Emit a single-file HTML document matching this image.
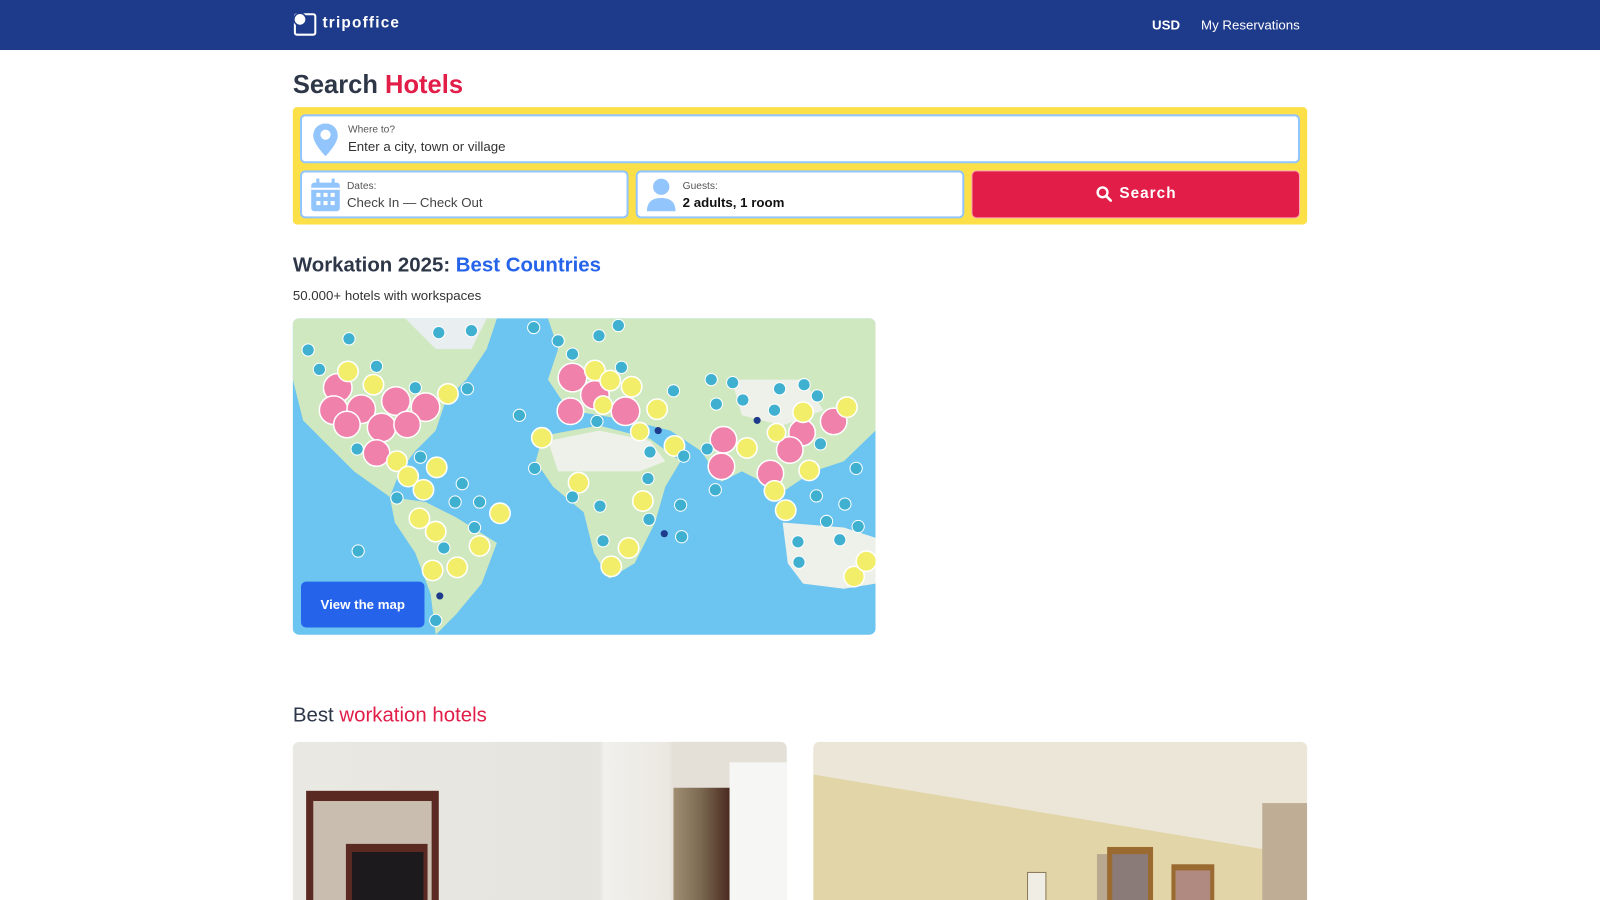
<!DOCTYPE html>
<html><head><meta charset="utf-8">
<style>
*{box-sizing:border-box;margin:0;padding:0}
html,body{width:1600px;height:900px;overflow:hidden;background:#fff}
body{font-family:"Liberation Sans","DejaVu Sans",sans-serif;color:#1f2937;position:relative}
#w{position:absolute;left:0;top:0;width:1568px;height:882px;transform:scale(1.020408);transform-origin:0 0}
.nav{position:absolute;left:0;top:0;width:1568px;height:49px;background:#1e3a8a}
.abs{position:absolute}
.box{position:absolute;background:#fff;border:2px solid #93c5fd;border-radius:5px}
.lbl{position:absolute;font-size:10px;color:#555}
.val{position:absolute;font-size:13px;color:#333}
</style></head><body><div id="w">
<div class="nav">
  <svg class="abs" style="left:287px;top:12px" width="24" height="24" viewBox="0 0 24 24"><rect x="2" y="2" width="20" height="20" rx="2" fill="none" stroke="#fff" stroke-width="2"/><circle cx="7" cy="7" r="6" fill="#fff" stroke="#1e3a8a" stroke-width="1.5"/></svg>
  <div class="abs" style="left:316px;top:14px;color:#fff;font-weight:bold;font-size:15px;letter-spacing:1.2px">tripoffice</div>
  <div class="abs" style="left:1129px;top:17px;color:#fff;font-weight:bold;font-size:13px">USD</div>
  <div class="abs" style="left:1177px;top:17px;color:#fff;font-size:13px">My Reservations</div>
</div>
<div class="abs" style="left:287px;top:69px;font-size:25px;font-weight:bold;color:#2d3748">Search <span style="color:#e11d48">Hotels</span></div>
<div class="abs" style="left:287px;top:105px;width:994px;height:115px;background:#fde047;border-radius:4px"></div>
<div class="box" style="left:294px;top:112px;width:980px;height:48px">
  <svg class="abs" style="left:10px;top:6px" width="26" height="34" viewBox="0 0 26 34"><path d="M13 1C6 1 1 6 1 13c0 8 12 20 12 20s12-12 12-20C25 6 20 1 13 1z" fill="#93c5fd"/><circle cx="13" cy="12" r="5" fill="#fff"/></svg>
  <div class="lbl" style="left:45px;top:8px">Where to?</div>
  <div class="val" style="left:45px;top:22px">Enter a city, town or village</div>
</div>
<div class="box" style="left:294px;top:167px;width:322px;height:47px">
  <svg class="abs" style="left:8px;top:5px" width="30" height="34" viewBox="0 0 30 34"><rect x="1" y="5" width="28" height="28" rx="3" fill="#93c5fd"/><rect x="6" y="1" width="3" height="7" fill="#93c5fd"/><rect x="21" y="1" width="3" height="7" fill="#93c5fd"/><rect x="1" y="10" width="28" height="2" fill="#fff"/><g fill="#fff"><rect x="6" y="15" width="4" height="4"/><rect x="13" y="15" width="4" height="4"/><rect x="20" y="15" width="4" height="4"/><rect x="6" y="23" width="4" height="4"/><rect x="13" y="23" width="4" height="4"/><rect x="20" y="23" width="4" height="4"/></g></svg>
  <div class="lbl" style="left:44px;top:8px">Dates:</div>
  <div class="val" style="left:44px;top:22px;color:#444">Check In — Check Out</div>
</div>
<div class="box" style="left:623px;top:167px;width:322px;height:47px">
  <svg class="abs" style="left:8px;top:5px" width="30" height="34" viewBox="0 0 30 34"><circle cx="15" cy="9" r="8" fill="#93c5fd"/><path d="M1 33c0-9 5-13 14-13s14 4 14 13z" fill="#93c5fd"/></svg>
  <div class="lbl" style="left:44px;top:8px">Guests:</div>
  <div class="val" style="left:44px;top:22px;color:#111;font-weight:bold">2 adults, 1 room</div>
</div>
<div class="abs" style="left:952px;top:167px;width:322px;height:47px;background:#e11d48;border-radius:5px;border:1px solid #f9a8b8"></div>
<svg class="abs" style="left:1074px;top:182px" width="16" height="16" viewBox="0 0 16 16"><circle cx="6.5" cy="6.5" r="4.8" fill="none" stroke="#fff" stroke-width="2.4"/><path d="M10 10l4.5 4.5" stroke="#fff" stroke-width="2.6" stroke-linecap="round"/></svg>
<div class="abs" style="left:1097px;top:181px;color:#fff;font-weight:bold;font-size:15px;letter-spacing:1px">Search</div>

<div class="abs" style="left:287px;top:249px;font-size:20px;font-weight:bold;color:#2d3748">Workation 2025: <span style="color:#2563eb">Best Countries</span></div>
<div class="abs" style="left:287px;top:282px;font-size:13px;color:#333">50.000+ hotels with workspaces</div>

<div class="abs" style="left:287px;top:312px;width:571px;height:310px;border-radius:6px;overflow:hidden;background:#6cc4f0">
<svg width="571" height="310" viewBox="0 0 571 310">
<g fill="#cfe8bf">
<path d="M0 0H200L190 30L170 60L150 80L140 110L120 130L105 150L95 175L60 150L30 120L10 100L0 60Z"/>
<path d="M95 175L130 180L160 195L200 220L185 260L160 290L140 310L135 270L120 230L100 200Z"/>
<path d="M250 0H571V110L540 140L510 150L480 170L440 150L420 160L400 130L370 110L330 100L300 95L270 90L250 60L260 30Z"/>
<path d="M245 115L300 105L350 118L380 140L365 165L355 200L335 240L310 255L295 230L285 190L255 165L238 140Z"/>
<path d="M250 120L300 110L350 120L365 140L340 150L300 150L260 150Z" fill="#eef0ea"/>
<path d="M480 200L540 205L571 215V260L540 265L500 260L485 240Z" fill="#eef0ea"/>
<path d="M430 60L500 60L520 90L480 105L440 95Z" fill="#eef0ea"/>
<path d="M110 0H190L175 30L140 30Z" fill="#e9eef0"/>
</g>
<g fill="#f081aa" stroke="#fff" stroke-width="1.5">
<circle cx="44" cy="68" r="14"/><circle cx="40" cy="90" r="14"/><circle cx="67" cy="89" r="14"/><circle cx="101" cy="81" r="14"/><circle cx="130" cy="87" r="14"/><circle cx="53" cy="104" r="13"/><circle cx="87" cy="107" r="14"/><circle cx="112" cy="104" r="13"/><circle cx="82" cy="132" r="13"/><circle cx="274" cy="58" r="14"/><circle cx="296" cy="75" r="14"/><circle cx="272" cy="91" r="13"/><circle cx="326" cy="91" r="14"/><circle cx="422" cy="119" r="13"/><circle cx="420" cy="145" r="13"/><circle cx="499" cy="112" r="13"/><circle cx="487" cy="129" r="13"/><circle cx="468" cy="152" r="13"/><circle cx="530" cy="101" r="13"/>
</g>
<g fill="#f2ee6a" stroke="#fff" stroke-width="1.5">
<circle cx="54" cy="52" r="10"/><circle cx="79" cy="65" r="10"/><circle cx="152" cy="74" r="10"/><circle cx="296" cy="51" r="10"/><circle cx="311" cy="61" r="10"/><circle cx="332" cy="67" r="10"/><circle cx="304" cy="85" r="9"/><circle cx="357" cy="89" r="10"/><circle cx="340" cy="111" r="9"/><circle cx="244" cy="117" r="10"/><circle cx="374" cy="125" r="10"/><circle cx="445" cy="127" r="10"/><circle cx="474" cy="112" r="9"/><circle cx="500" cy="92" r="10"/><circle cx="506" cy="149" r="10"/><circle cx="543" cy="87" r="10"/><circle cx="102" cy="140" r="10"/><circle cx="113" cy="155" r="10"/><circle cx="141" cy="146" r="10"/><circle cx="128" cy="168" r="10"/><circle cx="124" cy="196" r="10"/><circle cx="140" cy="209" r="10"/><circle cx="203" cy="191" r="10"/><circle cx="183" cy="223" r="10"/><circle cx="161" cy="244" r="10"/><circle cx="137" cy="247" r="10"/><circle cx="280" cy="161" r="10"/><circle cx="343" cy="179" r="10"/><circle cx="329" cy="225" r="10"/><circle cx="312" cy="243" r="10"/><circle cx="472" cy="169" r="10"/><circle cx="483" cy="188" r="10"/><circle cx="550" cy="253" r="10"/><circle cx="562" cy="238" r="10"/>
</g>
<g fill="#3fb0d0" stroke="#fff" stroke-width="1">
<circle cx="15" cy="31" r="6"/><circle cx="55" cy="20" r="6"/><circle cx="143" cy="14" r="6"/><circle cx="175" cy="12" r="6"/><circle cx="82" cy="47" r="6"/><circle cx="26" cy="50" r="6"/><circle cx="120" cy="68" r="6"/><circle cx="171" cy="69" r="6"/><circle cx="222" cy="95" r="6"/><circle cx="63" cy="128" r="6"/><circle cx="125" cy="136" r="6"/><circle cx="166" cy="162" r="6"/><circle cx="183" cy="180" r="6"/><circle cx="159" cy="180" r="6"/><circle cx="178" cy="205" r="6"/><circle cx="148" cy="225" r="6"/><circle cx="64" cy="228" r="6"/><circle cx="102" cy="176" r="6"/><circle cx="236" cy="9" r="6"/><circle cx="260" cy="22" r="6"/><circle cx="300" cy="17" r="6"/><circle cx="319" cy="7" r="6"/><circle cx="322" cy="48" r="6"/><circle cx="274" cy="35" r="6"/><circle cx="298" cy="101" r="6"/><circle cx="373" cy="71" r="6"/><circle cx="410" cy="60" r="6"/><circle cx="431" cy="63" r="6"/><circle cx="415" cy="84" r="6"/><circle cx="441" cy="80" r="6"/><circle cx="477" cy="69" r="6"/><circle cx="501" cy="65" r="6"/><circle cx="514" cy="76" r="6"/><circle cx="517" cy="123" r="6"/><circle cx="472" cy="90" r="6"/><circle cx="406" cy="128" r="6"/><circle cx="383" cy="135" r="6"/><circle cx="350" cy="131" r="6"/><circle cx="348" cy="157" r="6"/><circle cx="237" cy="147" r="6"/><circle cx="274" cy="175" r="6"/><circle cx="301" cy="184" r="6"/><circle cx="349" cy="197" r="6"/><circle cx="380" cy="183" r="6"/><circle cx="381" cy="214" r="6"/><circle cx="304" cy="218" r="6"/><circle cx="414" cy="168" r="6"/><circle cx="541" cy="182" r="6"/><circle cx="513" cy="174" r="6"/><circle cx="523" cy="199" r="6"/><circle cx="552" cy="147" r="6"/><circle cx="495" cy="219" r="6"/><circle cx="536" cy="217" r="6"/><circle cx="496" cy="239" r="6"/><circle cx="554" cy="204" r="6"/><circle cx="140" cy="296" r="6"/>
</g>
<g fill="#1e3a8a"><circle cx="358" cy="110" r="3.5"/><circle cx="455" cy="100" r="3.5"/><circle cx="364" cy="211" r="3.5"/><circle cx="144" cy="272" r="3.5"/></g>
</svg>
<div class="abs" style="left:8px;top:258px;width:121px;height:45px;background:#2563eb;border-radius:5px;color:#fff;font-weight:bold;font-size:13px;line-height:45px;text-align:center">View the map</div>
</div>

<div class="abs" style="left:287px;top:690px;font-size:20px;color:#2d3748">Best <span style="color:#e11d48">workation hotels</span></div>

<div class="abs" style="left:287px;top:727px;width:484px;height:173px;border-radius:6px 6px 0 0;overflow:hidden;background:linear-gradient(90deg,#eae8e3 0%,#e6e4de 62%,#f1f0ec 63%,#ebe8e2 76%,#e4e0d8 77%)">
  <div class="abs" style="left:13px;top:48px;width:130px;height:140px;background:#5a2a22"></div>
  <div class="abs" style="left:20px;top:58px;width:116px;height:130px;background:#c9bdb0"></div>
  <div class="abs" style="left:52px;top:100px;width:80px;height:90px;background:#5a2a22"></div>
  <div class="abs" style="left:58px;top:108px;width:70px;height:80px;background:#1c1a1c"></div>
  <div class="abs" style="left:373px;top:45px;width:55px;height:140px;background:linear-gradient(90deg,#a08e74,#7a6850,#4a2a20)"></div>
  <div class="abs" style="left:428px;top:20px;width:56px;height:160px;background:#f6f6f4"></div>
</div>
<div class="abs" style="left:797px;top:727px;width:484px;height:173px;border-radius:6px 6px 0 0;overflow:hidden;background:#ece6d8">
  <svg width="484" height="173" viewBox="0 0 484 173"><polygon points="0,32 0,173 440,173 440,105" fill="#e2d6a8"/><polygon points="440,105 484,90 484,173 440,173" fill="#d9cc9f"/><rect x="278" y="110" width="12" height="63" fill="#b9a890"/><rect x="288" y="103" width="45" height="70" fill="#9a6a30"/><rect x="293" y="110" width="35" height="63" fill="#8a7a78"/><rect x="351" y="120" width="42" height="53" fill="#9a6a30"/><rect x="355" y="126" width="34" height="47" fill="#b08a80"/><rect x="440" y="60" width="44" height="113" fill="#bfae95"/><rect x="210" y="128" width="18" height="28" fill="#f0ede4" stroke="#8a7a5a"/><rect x="30" y="165" width="130" height="8" fill="#9a5a2a"/></svg>
</div>
</div></body></html>
